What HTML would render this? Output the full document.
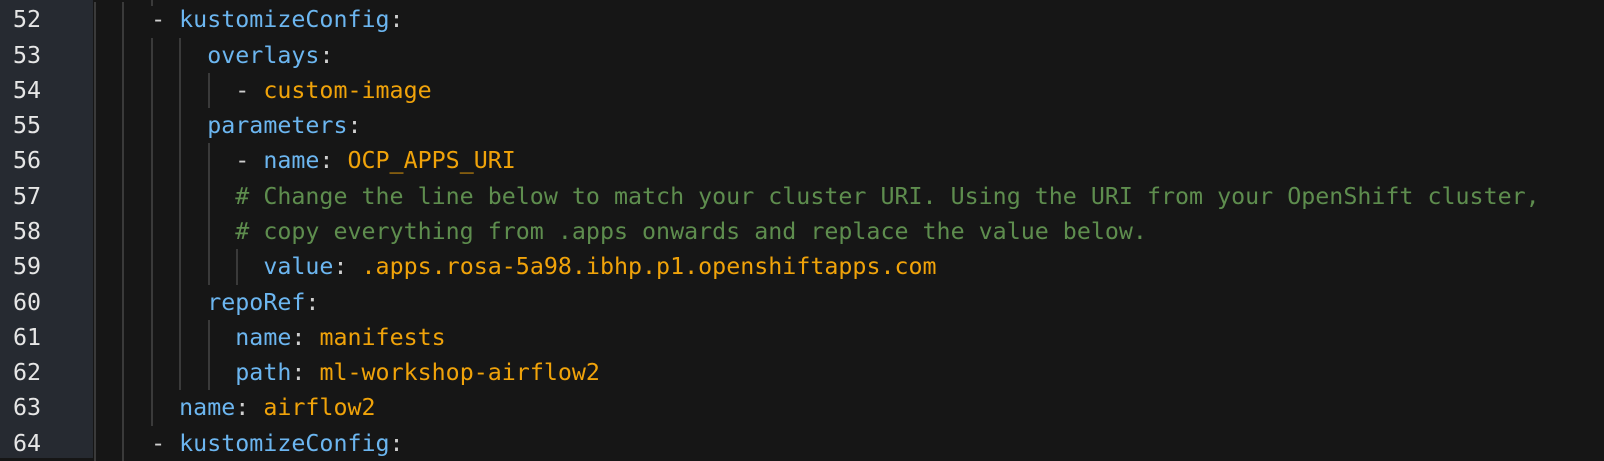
<!DOCTYPE html>
<html><head><meta charset="utf-8"><style>
body{margin:0;width:1604px;height:458px;background:#161616;overflow:hidden;position:relative;font-family:"DejaVu Sans Mono","Liberation Mono",monospace;font-size:23.3px;}
#g{position:absolute;left:0;top:0;width:93px;height:458px;background:#262a31;}
.n{position:absolute;left:13px;color:#e6e6e6;height:35.27px;line-height:35.27px;}
.l{position:absolute;left:95px;white-space:pre;color:#cfcfcf;height:35.27px;line-height:35.27px;}
.k{color:#6cb6f0}.v{color:#f0a30a}.c{color:#5e8d4e}
.gd{position:absolute;width:2px;background:#3a3a3a;}
</style></head><body>
<div id="g"></div>
<div id="c"></div>
<script>
var lines=[
[52,4,'- <span class="k">kustomizeConfig</span>:'],
[53,8,'<span class="k">overlays</span>:'],
[54,10,'- <span class="v">custom-image</span>'],
[55,8,'<span class="k">parameters</span>:'],
[56,10,'- <span class="k">name</span>: <span class="v">OCP_APPS_URI</span>'],
[57,10,'<span class="c"># Change the line below to match your cluster URI. Using the URI from your OpenShift cluster,</span>'],
[58,10,'<span class="c"># copy everything from .apps onwards and replace the value below.</span>'],
[59,12,'<span class="k">value</span>: <span class="v">.apps.rosa-5a98.ibhp.p1.openshiftapps.com</span>'],
[60,8,'<span class="k">repoRef</span>:'],
[61,10,'<span class="k">name</span>: <span class="v">manifests</span>'],
[62,10,'<span class="k">path</span>: <span class="v">ml-workshop-airflow2</span>'],
[63,6,'<span class="k">name</span>: <span class="v">airflow2</span>'],
[64,4,'- <span class="k">kustomizeConfig</span>:']
];
var cw=14.2,lh=35.27,t0=2.4,h='';
lines.forEach(function(a,i){
 var y=t0+i*lh;
 h+='<div class="n" style="top:'+y+'px">'+a[0]+'</div>';
 h+='<div class="l" style="top:'+y+'px">'+' '.repeat(a[1])+a[2]+'</div>';
 var ind=a[1];
 for(var c=0;c<ind;c+=2){h+='<div class="gd" style="left:'+(95+c*cw-1)+'px;top:'+y+'px;height:'+lh+'px"></div>';}
});
h+='<div class="gd" style="left:'+(95+4*cw-1)+'px;top:0;height:6px"></div>';
document.getElementById('c').innerHTML=h;
</script>
</body></html>
